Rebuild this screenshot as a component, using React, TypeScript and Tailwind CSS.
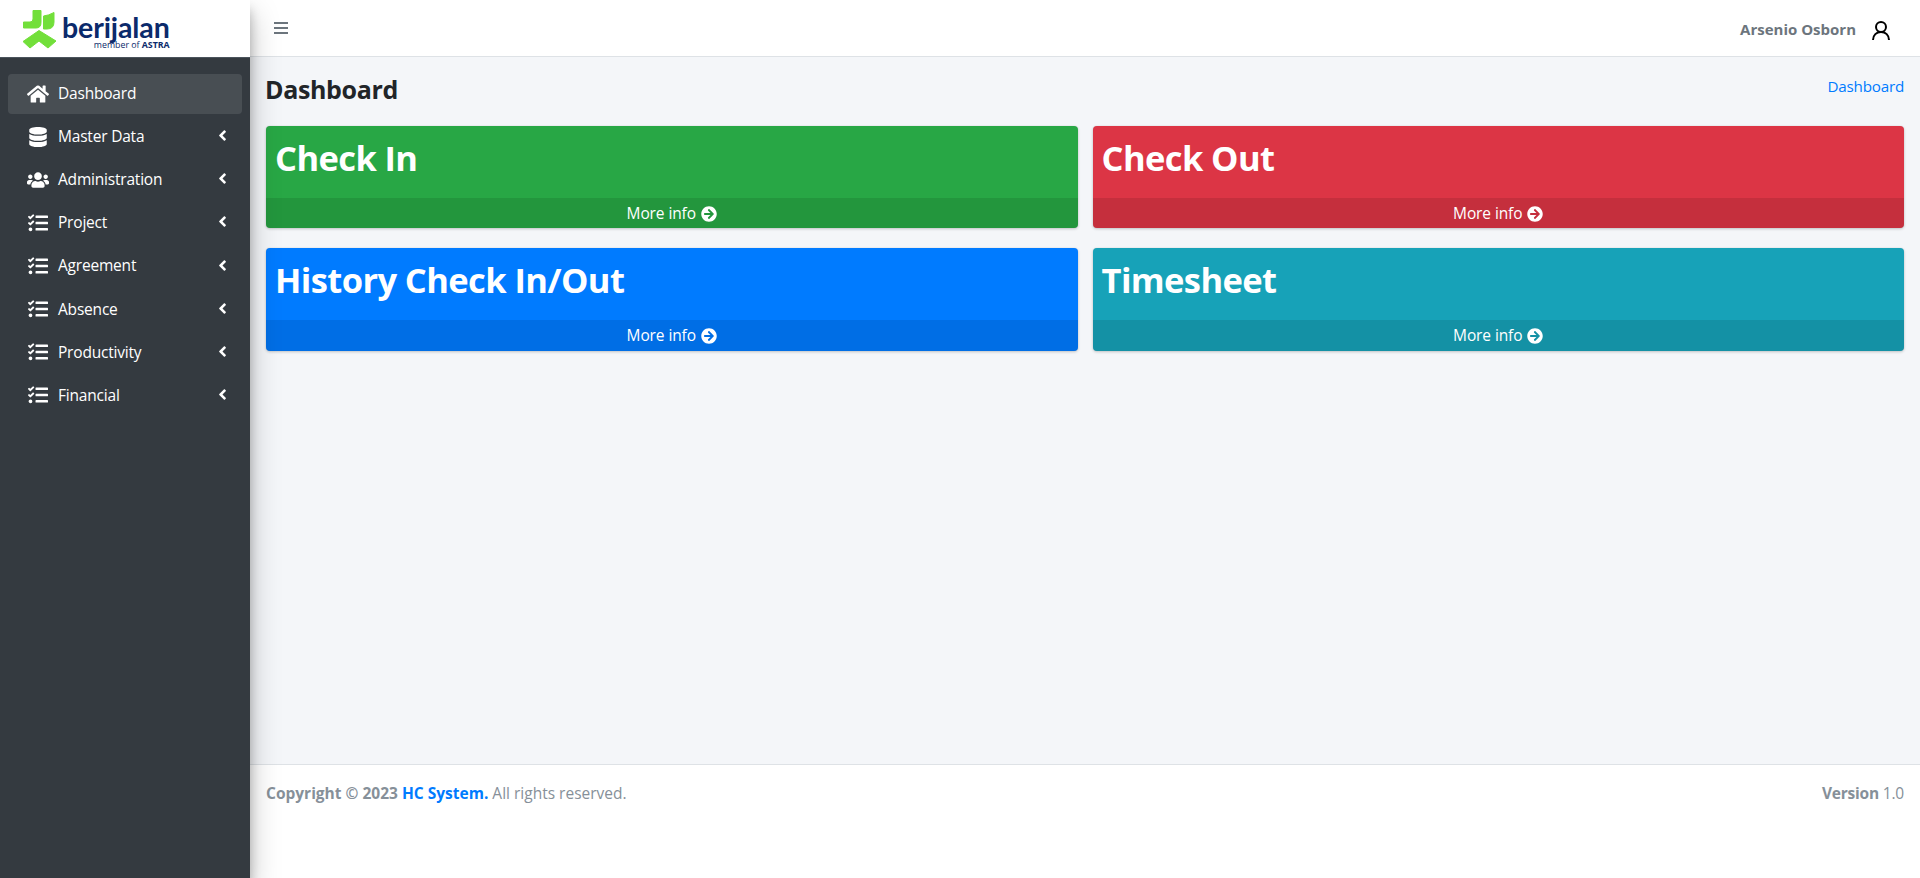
import { FaHome, FaDatabase, FaUsers, FaTasks, FaAngleLeft, FaArrowCircleRight } from "react-icons/fa";

const font = "[font-family:'Open_Sans','Noto_Sans',sans-serif]";

const items = [
  { label: "Master Data", Icon: FaDatabase },
  { label: "Administration", Icon: FaUsers },
  { label: "Project", Icon: FaTasks },
  { label: "Agreement", Icon: FaTasks },
  { label: "Absence", Icon: FaTasks },
  { label: "Productivity", Icon: FaTasks },
  { label: "Financial", Icon: FaTasks },
];

function Logo() {
  return (
    <div className="flex h-[57px] items-center bg-white pl-[22px]">
      <svg viewBox="0 0 36 40" className="h-[40px] w-[36px] shrink-0" fill="#72df3a" stroke="#72df3a" strokeWidth="1" strokeLinejoin="round">
        <path d="M11 1.500h8v12q0 5.500-5 5.500H1.500v-6H8q3 0 3-3z" />
        <path d="M21.500 7q5-.5 10.500-3.500V13q0 7-7 7h-3.500z" />
        <path d="M17 21.500L34 32l-8 7-9-7-9 7-7-6.500z" />
      </svg>
      <div className="ml-[4px] flex flex-col items-end pt-[11px]">
        <div className="text-[28.500px] leading-[20px] font-bold tracking-[-0.1px] text-[#0b2a6b] [font-family:'Lato',sans-serif]">berijalan</div>
        <div className="mt-[1px] text-[8.800px] leading-[14px] text-[#0b2a6b] [font-family:'Open_Sans',sans-serif]">member of <b>ASTRA</b></div>
      </div>
    </div>
  );
}

function Card({ title, bg }: { title: string; bg: string }) {
  return (
    <div className={`overflow-hidden rounded-[4px] text-white shadow-[0_0_1px_rgba(0,0,0,0.125),0_1px_3px_rgba(0,0,0,0.2)] ${bg}`}>
      <div className="h-[72px] pl-[9px] pr-[10px] pt-[11px]">
        <h3 className="text-[34.500px] leading-[42px] font-bold tracking-[-0.6px]">{title}</h3>
      </div>
      <div className="flex h-[30.500px] items-center justify-center gap-[5px] bg-black/10 pt-[1.500px] text-[15.500px] tracking-[-0.1px]">
        More info <FaArrowCircleRight className="text-[16px]" />
      </div>
    </div>
  );
}

export default function App() {
  return (
    <div className={`flex h-[878px] w-full overflow-hidden bg-white text-[16px] ${font}`}>
      <aside className="relative z-10 flex w-[250px] shrink-0 flex-col bg-[#343a40] shadow-[0_14px_28px_rgba(0,0,0,0.25),0_10px_10px_rgba(0,0,0,0.22)]">
        <Logo />
        <nav className="flex flex-col gap-[3.100px] border-t border-[#4b545c] px-2 pt-[15.700px] text-[#c2c7d0]">
          <div className="flex h-[40px] items-center rounded-[4px] bg-white/10 pl-[19px] text-white">
            <FaHome className="w-[22px] text-[20px]" />
            <span className="ml-[9px] text-[15.500px] tracking-[-0.2px]">Dashboard</span>
          </div>
          {items.map(({ label, Icon }) => (
            <div key={label} className="flex h-[40px] items-center pl-[19px] pr-[11px] text-white">
              <Icon className="w-[22px] text-[20px]" />
              <span className="ml-[9px] flex-1 text-[15.500px] tracking-[-0.2px]">{label}</span>
              <FaAngleLeft className="mb-[2px] text-[17px]" />
            </div>
          ))}
        </nav>
      </aside>
      <div className="flex min-w-0 flex-1 flex-col">
        <header className="flex h-[57px] shrink-0 items-center justify-between border-b border-[#dee2e6] bg-white pl-[23px] pr-[27px]">
          <svg viewBox="0 0 16 16" className="h-[16px] w-[16px]" fill="none" stroke="#6c757d" strokeWidth="2">
            <path d="M1 3h14M1 8h14M1 13h14" />
          </svg>
          <div className="flex items-center gap-[13px]">
            <span className="pt-[2px] text-[15px] font-bold text-[#6c757d]">Arsenio Osborn</span>
            <svg viewBox="0 0 24 24" className="h-[24px] w-[24px]" fill="none" stroke="#000" strokeWidth="2">
              <circle cx="12" cy="11" r="5" />
              <path d="M4 24c0-5 3.500-8 8-8s8 3 8 8" />
            </svg>
          </div>
        </header>
        <main className="flex-1 bg-[#f4f6f9] px-4">
          <div className="flex items-start justify-between pt-[16px]">
            <h1 className="-ml-px text-[25px] leading-[32px] font-bold tracking-[-0.35px] text-[#212529]">Dashboard</h1>
            <a className="pt-[1px] text-[15.200px] leading-[24px] tracking-[-0.2px] text-[#007bff]">Dashboard</a>
          </div>
          <div className="mt-[20.600px] grid grid-cols-2 gap-x-[15px] gap-y-[20px]">
            <Card title="Check In" bg="bg-[#28a745]" />
            <Card title="Check Out" bg="bg-[#dc3545]" />
            <Card title="History Check In/Out" bg="bg-[#007bff]" />
            <Card title="Timesheet" bg="bg-[#17a2b8]" />
          </div>
        </main>
        <footer className="flex h-[114px] shrink-0 items-start justify-between border-t border-[#dee2e6] bg-white px-4 pt-[16px] text-[15.500px] leading-[24px] text-[#869099]">
          <div>
            <b>Copyright © 2023 <span className="text-[#007bff]">HC System.</span></b> All rights reserved.
          </div>
          <div className="tracking-[-0.2px]">
            <b>Version</b> 1.0
          </div>
        </footer>
      </div>
    </div>
  );
}
